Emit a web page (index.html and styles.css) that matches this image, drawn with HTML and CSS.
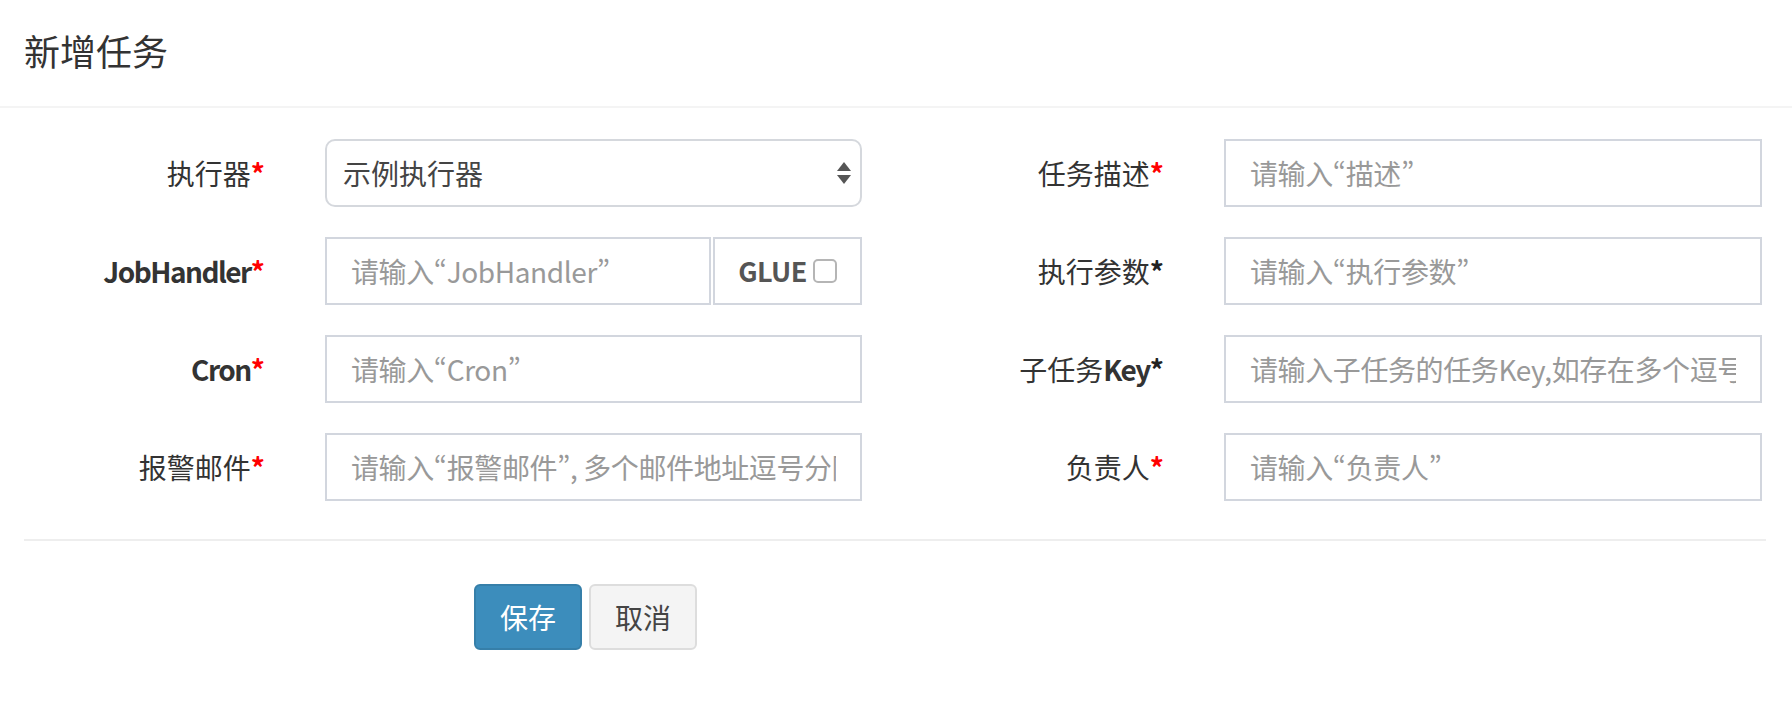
FILE: index.html
```html
<!DOCTYPE html>
<html lang="en">
<head>
  <meta charset="UTF-8">
  <meta name="viewport" content="width=device-width, initial-scale=1.0">
  <title>新增任务</title>
  <link rel="stylesheet" href="styles.css">
</head>
<body>
  <div class="modal">
    <div class="modal-header">
      <h4 class="modal-title">新增任务</h4>
    </div>

    <form class="modal-body">
      <div class="form-row">
        <label class="form-label">执行器<span class="req">*</span></label>
        <div class="field">
          <div class="select">
            <span>示例执行器</span>
            <svg class="caret" width="16" height="26" viewBox="0 0 16 26">
              <path d="M8 2 L15 11 L1 11 Z" fill="#555"/>
              <path d="M1 15 L15 15 L8 24 Z" fill="#555"/>
            </svg>
          </div>
        </div>
        <label class="form-label">任务描述<span class="req">*</span></label>
        <div class="field">
          <div class="form-control"><input type="text" placeholder="请输入“描述”"></div>
        </div>
      </div>

      <div class="form-row">
        <label class="form-label"><b>JobHandler</b><span class="req">*</span></label>
        <div class="field">
          <div class="input-group">
            <div class="form-control"><input type="text" placeholder="请输入“JobHandler”"></div>
            <span class="addon">GLUE <span class="checkbox"></span></span>
          </div>
        </div>
        <label class="form-label">执行参数<span class="req black">*</span></label>
        <div class="field">
          <div class="form-control"><input type="text" placeholder="请输入“执行参数”"></div>
        </div>
      </div>

      <div class="form-row">
        <label class="form-label"><b>Cron</b><span class="req">*</span></label>
        <div class="field">
          <div class="form-control"><input type="text" placeholder="请输入“Cron”"></div>
        </div>
        <label class="form-label">子任务<b>Key</b><span class="req black">*</span></label>
        <div class="field">
          <div class="form-control"><input type="text" placeholder="请输入子任务的任务Key,如存在多个逗号分隔"></div>
        </div>
      </div>

      <div class="form-row">
        <label class="form-label">报警邮件<span class="req">*</span></label>
        <div class="field">
          <div class="form-control"><input type="text" placeholder="请输入“报警邮件”,&#8195;多个邮件地址逗号分隔"></div>
        </div>
        <label class="form-label">负责人<span class="req">*</span></label>
        <div class="field">
          <div class="form-control"><input type="text" placeholder="请输入“负责人”"></div>
        </div>
      </div>

      <hr class="divider">

      <div class="actions">
        <button type="button" class="btn btn-primary">保存</button>
        <button type="button" class="btn btn-default">取消</button>
      </div>
    </form>
  </div>
</body>
</html>
```

FILE: styles.css
```css
* {
  margin: 0;
  padding: 0;
  box-sizing: border-box;
}
body {
  background: #fff;
  color: #333;
  font-family: "Noto Sans CJK SC", "Source Sans Pro", sans-serif;
  font-size: 28px;
  line-height: 40px;
}
.modal-header {
  height: 108px;
  padding: 0 24px;
  display: flex;
  align-items: center;
  border-bottom: 2px solid #f4f4f4;
}
.modal-title {
  font-size: 36px;
  font-weight: normal;
  line-height: 52px;
  margin-top: -6px;
}
.modal-body {
  padding-top: 31px;
}
.form-row {
  display: grid;
  grid-template-columns: 295px 597px 302px 598px;
  align-items: center;
  margin-bottom: 30px;
}
.form-label {
  padding: 0 30px;
  text-align: right;
}
.form-label b {
  font-weight: 700;
  letter-spacing: -1.5px;
}
.req {
  color: #f00;
  font-weight: 700;
}
.req.black {
  color: #222;
}
.field {
  padding: 0 30px;
}
.form-control {
  display: flex;
  align-items: center;
  width: 100%;
  height: 68px;
  padding: 0 24px;
  border: 2px solid #d2d6de;
  background: #fff;
}
.form-control input {
  flex: 1;
  min-width: 0;
  height: 40px;
  border: 0;
  padding: 0;
  font-family: inherit;
  font-size: 28px;
  font-feature-settings: "pwid" 1;
  letter-spacing: -0.4px;
  color: #555;
  background: transparent;
  outline: none;
}
.form-control input::placeholder {
  color: #999;
}
.select {
  height: 68px;
  display: flex;
  align-items: center;
  justify-content: space-between;
  padding: 0 8px 0 16px;
  border: 2px solid #d5d8dd;
  border-radius: 10px;
  color: #444;
}
.input-group {
  display: flex;
}
.input-group .form-control {
  flex: 1;
  min-width: 0;
}
.addon {
  flex: none;
  width: 149px;
  margin-left: 2px;
  height: 68px;
  display: flex;
  align-items: center;
  justify-content: center;
  gap: 6px;
  border: 2px solid #d2d6de;
  font-size: 27px;
  font-weight: 700;
  letter-spacing: -0.5px;
  color: #555;
}
.checkbox {
  width: 24px;
  height: 24px;
  border: 2px solid #b5b5b5;
  border-radius: 5px;
  background: #fff;
}
.divider {
  border: 0;
  border-top: 2px solid #eee;
  margin: 38px 26px 43px 24px;
}
.actions {
  display: flex;
  gap: 7px;
  padding-left: 474px;
}
.btn {
  font-family: inherit;
  font-size: 28px;
  line-height: 40px;
  padding: 11px 24px;
  border: 2px solid;
  border-radius: 6px;
  cursor: pointer;
}
.btn-primary {
  background: #3c8dbc;
  border-color: #367fa9;
  color: #fff;
}
.btn-default {
  background: #f4f4f4;
  border-color: #ddd;
  color: #444;
}
```
